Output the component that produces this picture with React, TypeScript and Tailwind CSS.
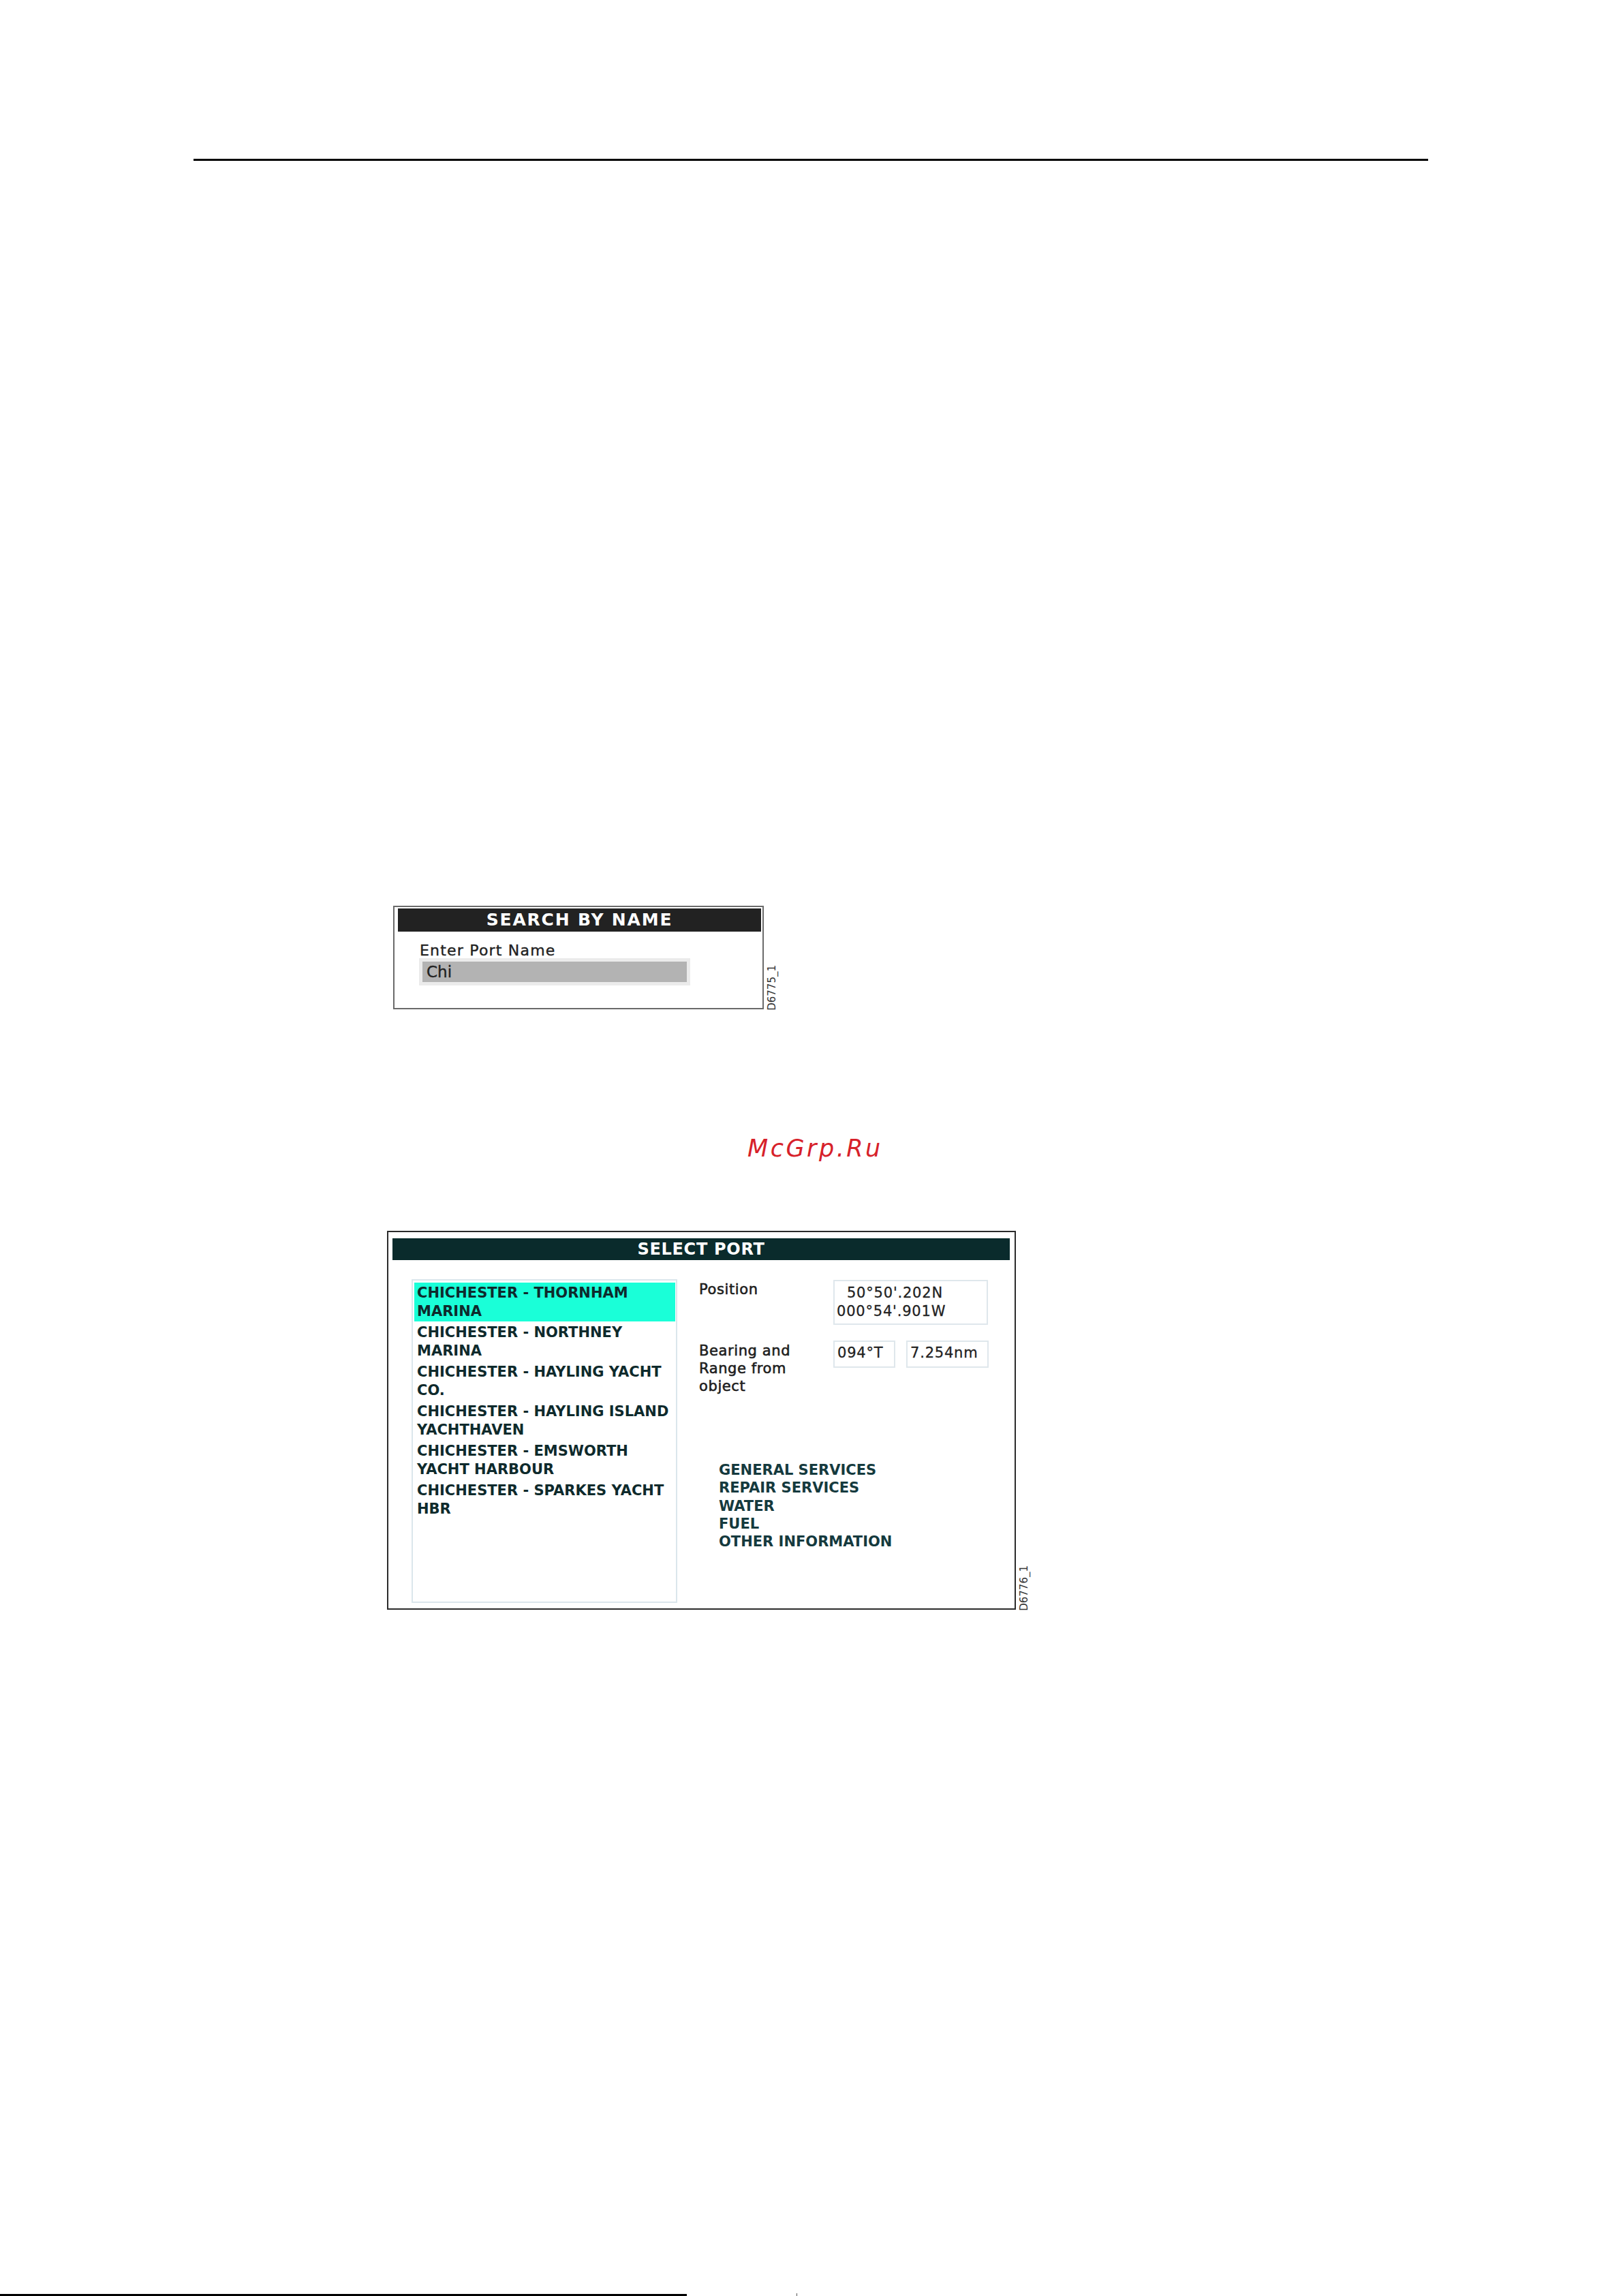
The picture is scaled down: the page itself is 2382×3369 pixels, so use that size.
import React from 'react';

const ports = [
    ['CHICHESTER - THORNHAM', 'MARINA'],
    ['CHICHESTER - NORTHNEY', 'MARINA'],
    ['CHICHESTER - HAYLING YACHT', 'CO.'],
    ['CHICHESTER - HAYLING ISLAND', 'YACHTHAVEN'],
    ['CHICHESTER - EMSWORTH', 'YACHT HARBOUR'],
    ['CHICHESTER - SPARKES YACHT', 'HBR'],
];

const services = ['GENERAL SERVICES', 'REPAIR SERVICES', 'WATER', 'FUEL', 'OTHER INFORMATION'];

function FigureLabel({ text }: { text: string }) {
    return (
        <span className="[writing-mode:vertical-rl] rotate-180 text-[15px] leading-[15px] text-[#333] mb-[-2px]">
            {text}
        </span>
    );
}

function SearchByName() {
    return (
        <div className="mt-[1093px] ml-[577px] flex items-end gap-[5px]">
            <div className="w-[544px] h-[152px] border-2 border-[#6a6a6a] pt-[2px] pl-[5px] pr-[2px]">
                {/* Header */}
                <div className="h-[34px] bg-[#222] text-white font-bold text-[25px] leading-[34px] tracking-[1.8px] text-center">
                    SEARCH BY NAME
                </div>
                <div className="mt-[17px] ml-[32px] text-[22px] leading-[22px] tracking-[1.2px] text-[#222] [-webkit-text-stroke:0.4px_#222]">
                    Enter Port Name
                </div>
                <div className="ml-[31px] w-[398px] h-[40px] bg-[#ebebeb] p-[5px]">
                    <div className="h-[30px] bg-[#b3b3b3] pl-[6px] text-[23px] leading-[30px] text-[#222] [-webkit-text-stroke:0.4px_#222]">
                        Chi
                    </div>
                </div>
            </div>
            <FigureLabel text="D6775_1" />
        </div>
    );
}

function SelectPort() {
    return (
        <div className="mt-[103px] ml-[568px] flex items-end gap-[5px]">
            <div className="w-[923px] h-[556px] border-2 border-[#2b2b2b] pt-[9px] pl-[6px] pr-[7px]">
                {/* Header */}
                <div className="h-[32px] bg-[#0a2b2c] text-white font-bold text-[24px] leading-[32px] tracking-[0.7px] text-center">
                    SELECT PORT
                </div>

                <div className="flex">
                    {/* Port list */}
                    <div className="mt-[28px] ml-[28px] w-[390px] h-[475px] border-2 border-[#dbe6ec] pt-[3px] pl-[2px] pr-[1px] flex flex-col gap-[1px]">
                        {ports.map(([a, b], i) => (
                            <div
                                key={i}
                                className={
                                    (i === 0 ? 'bg-[#1affd8] ' : '') +
                                    'py-[2px] pl-[4px] font-bold text-[21px] leading-[26.5px] text-[#0e2a2c]'
                                }
                            >
                                {a}
                                <br />
                                {b}
                            </div>
                        ))}
                    </div>

                    {/* Details */}
                    <div className="mt-[29px] ml-[32px] flex flex-col">
                        <div className="flex">
                            <div className="w-[197px] pt-[1px] text-[21px] leading-[27px] tracking-[0.6px] text-[#1e1e1e] [-webkit-text-stroke:0.6px_#1e1e1e]">
                                Position
                            </div>
                            <div className="w-[227px] h-[66px] border-2 border-[#dfe7ec] pl-[3px] pt-[4px] text-[21px] leading-[27px] tracking-[0.8px] text-[#222] [-webkit-text-stroke:0.3px_#222]">
                                <div className="whitespace-pre">{'  50°50\'.202N'}</div>
                                <div>000°54'.901W</div>
                            </div>
                        </div>

                        <div className="flex mt-[23px]">
                            <div className="w-[197px] pt-[2px] text-[21px] leading-[26px] tracking-[0.6px] text-[#1e1e1e] [-webkit-text-stroke:0.6px_#1e1e1e]">
                                Bearing and
                                <br />
                                Range from
                                <br />
                                object
                            </div>
                            <div className="w-[91px] h-[40px] border-2 border-[#dfe7ec] pl-[4px] pt-[3px] text-[21px] leading-[27px] tracking-[0.8px] text-[#222] [-webkit-text-stroke:0.3px_#222]">
                                094°T
                            </div>
                            <div className="ml-[16px] w-[121px] h-[40px] border-2 border-[#dfe7ec] pl-[4px] pt-[3px] text-[21px] leading-[27px] tracking-[0.8px] text-[#222] [-webkit-text-stroke:0.3px_#222]">
                                7.254nm
                            </div>
                        </div>

                        <div className="mt-[97px] ml-[29px] flex flex-col">
                            {services.map((s) => (
                                <div key={s} className="font-bold text-[21px] leading-[26.3px] text-[#153a3e]">
                                    {s}
                                </div>
                            ))}
                        </div>
                    </div>
                </div>
            </div>
            <FigureLabel text="D6776_1" />
        </div>
    );
}

export default function App() {
    return (
        <div className="w-[2382px] h-[3369px] bg-white flex flex-col font-['DejaVu_Sans',sans-serif] overflow-hidden">
            {/* Top rule */}
            <div className="mt-[233px] ml-[284px] w-[1812px] h-[3px] bg-black" />

            <SearchByName />

            <div className="mt-[187px] ml-[1097px] italic text-[35px] leading-[35px] tracking-[3.5px] text-[#d7212a]">
                McGrp.Ru
            </div>

            <SelectPort />

            {/* Bottom rule */}
            <div className="mt-auto flex items-end">
                <div className="w-[1008px] h-[3px] bg-black" />
                <div className="ml-[161px] w-[1px] h-[4px] bg-[#555]" />
            </div>
        </div>
    );
}
